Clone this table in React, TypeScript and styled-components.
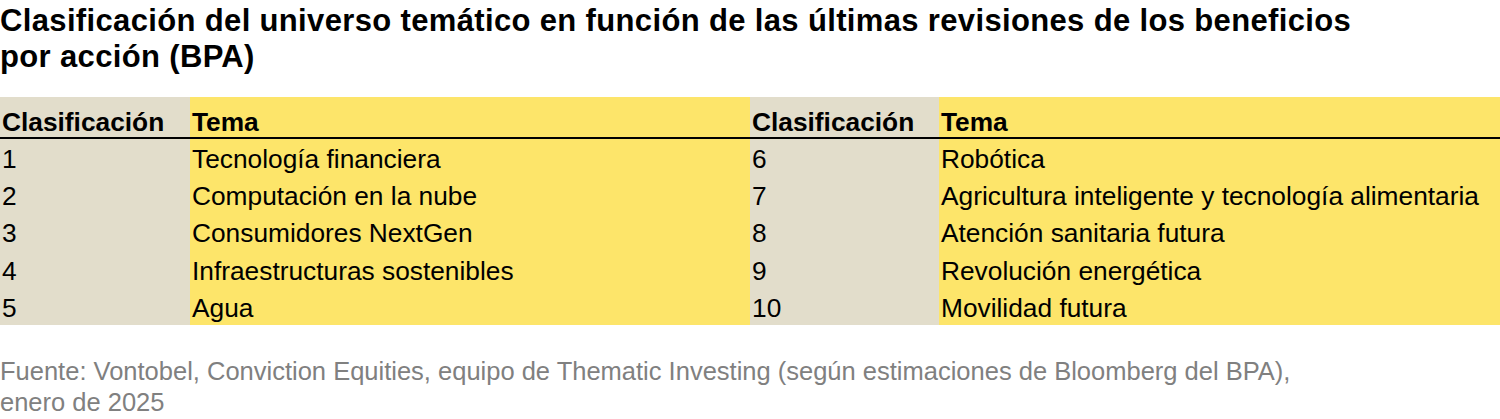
import React from 'react';
import styled, { createGlobalStyle } from 'styled-components';

const GlobalStyle = createGlobalStyle`
  html, body {
    margin: 0;
    padding: 0;
    background: #ffffff;
  }
  body {
    font-family: 'Liberation Sans', Arial, sans-serif;
    color: #000000;
  }
`;

const Page = styled.div`
  width: 1500px;
  padding-top: 3px;
`;

const Title = styled.h1`
  margin: 0;
  font-size: 31px;
  line-height: 36px;
  letter-spacing: 0.35px;
  font-weight: 700;
`;

const Table = styled.div`
  margin-top: 22px;
  display: grid;
  grid-template-columns: 190px 560px 189px 1fr;
`;

const Cell = styled.div<{ $rank?: boolean; $head?: boolean }>`
  box-sizing: border-box;
  background: ${(p) => (p.$rank ? '#e2ddcb' : '#fde56a')};
  padding-left: 2px;
  padding-top: ${(p) => (p.$head ? '12px' : '0')};
  font-size: 26.3px;
  font-weight: ${(p) => (p.$head ? 700 : 400)};
  height: ${(p) => (p.$head ? '42px' : '37.2px')};
  line-height: ${(p) => (p.$head ? '26px' : '40px')};
  border-bottom: ${(p) => (p.$head ? '2px solid #000' : 'none')};
  white-space: nowrap;
`;

const Source = styled.p`
  margin: 31px 0 0;
  font-size: 25.5px;
  line-height: 31px;
  color: #808080;
`;

const rows: [string, string, string, string][] = [
  ['1', 'Tecnología financiera', '6', 'Robótica'],
  ['2', 'Computación en la nube', '7', 'Agricultura inteligente y tecnología alimentaria'],
  ['3', 'Consumidores NextGen', '8', 'Atención sanitaria futura'],
  ['4', 'Infraestructuras sostenibles', '9', 'Revolución energética'],
  ['5', 'Agua', '10', 'Movilidad futura'],
];

const App = () => (
  <Page>
    <GlobalStyle />
    <Title>
      Clasificación del universo temático en función de las últimas revisiones de los beneficios
      <br />
      por acción (BPA)
    </Title>
    <Table>
      <Cell $rank $head>Clasificación</Cell>
      <Cell $head>Tema</Cell>
      <Cell $rank $head>Clasificación</Cell>
      <Cell $head>Tema</Cell>
      {rows.map((r) => (
        <React.Fragment key={r[0]}>
          <Cell $rank>{r[0]}</Cell>
          <Cell>{r[1]}</Cell>
          <Cell $rank>{r[2]}</Cell>
          <Cell>{r[3]}</Cell>
        </React.Fragment>
      ))}
    </Table>
    <Source>
      Fuente: Vontobel, Conviction Equities, equipo de Thematic Investing (según estimaciones de Bloomberg del BPA),
      <br />
      enero de 2025
    </Source>
  </Page>
);

export default App;
